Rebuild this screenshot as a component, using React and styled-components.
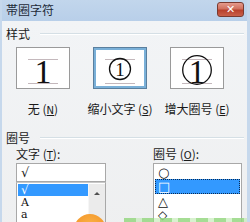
import React from "react";
import styled, { createGlobalStyle } from "styled-components";

const Global = createGlobalStyle`
  html, body { margin: 0; padding: 0; background: #f0f0f0; }
  body { font-family: "Noto Sans CJK SC", "DejaVu Sans", sans-serif; }
`;

const Window = styled.div`
  position: relative;
  width: 250px;
  height: 222px;
  overflow: hidden;
  background: #f0f0f0;
  box-sizing: border-box;
  border-left: 2px solid #c6d8ec;
  border-right: 3px solid #c6d8ec;
  display: flex;
  flex-direction: column;
  font-size: 12px;
  color: #1a1a1a;
`;

const TitleBar = styled.div`
  height: 21px;
  flex: none;
  display: flex;
  align-items: center;
  justify-content: space-between;
  padding: 0 3px 0 4px;
  background: linear-gradient(#c2d6ec, #b8cfe9);
`;

const Title = styled.span`
  font-size: 12px;
  line-height: 12px;
  color: #1e2a38;
  margin-top: -1px;
`;

const CloseBtn = styled.div`
  width: 27px;
  height: 15px;
  margin-top: -3px;
  box-sizing: border-box;
  border: 1px solid #7a3a30;
  border-radius: 3px;
  background: linear-gradient(#e59a8c 0%, #d0705e 45%, #b8402c 55%, #c9604a 100%);
  display: flex;
  align-items: center;
  justify-content: center;
  color: #fff;
  font-family: "DejaVu Sans", sans-serif;
  font-weight: bold;
  font-size: 11px;
  line-height: 11px;
`;

const Body = styled.div`
  flex: 1;
  display: flex;
  flex-direction: column;
  padding: 5px 3px 0 4px;
  background: linear-gradient(#f2f4f6, #eeeff0);
`;

const GroupHead = styled.div`
  display: flex;
  align-items: center;
  gap: 10px;
  height: 13px;
  flex: none;
  margin-top: ${p => p.$top || 0}px;
`;

const GroupLabel = styled.span`
  font-size: 12px;
  line-height: 12px;
`;

const GroupLine = styled.div`
  flex: 1;
  height: 0;
  border-top: 1px solid #d5dfe5;
  border-bottom: 1px solid #ffffff;
`;

const StyleRow = styled.div`
  display: flex;
  gap: 23px;
  padding-left: 10px;
  margin-top: 7px;
`;

const StyleCol = styled.div`
  display: flex;
  flex-direction: column;
  align-items: center;
  width: 54px;
`;

const Preview = styled.div`
  width: 54px;
  height: 42px;
  box-sizing: border-box;
  background: #fff;
  border: ${p => (p.$active ? "3px solid #7ab0d8" : "1px solid #9a9a9a")};
  outline: ${p => (p.$active ? "1px solid #5a7f9e" : "none")};
  outline-offset: -1px;
  display: flex;
  align-items: center;
  justify-content: center;
  overflow: visible;
`;

const OptLabel = styled.div`
  margin-top: 14px;
  font-size: 12px;
  line-height: 12px;
  height: 12px;
  white-space: nowrap;
`;

const U = styled.span`
  text-decoration: underline;
  font-family: "DejaVu Sans", sans-serif;
  font-size: 10px;
`;

const ListsRow = styled.div`
  display: flex;
  padding-left: 10px;
  gap: 47px;
  margin-top: 4px;
`;

const Field = styled.div`
  display: flex;
  flex-direction: column;
  width: ${p => p.$w}px;
`;

const FieldLabel = styled.div`
  font-size: 12px;
  line-height: 12px;
  height: 13px;
  margin-bottom: 2px;
`;

const EditBox = styled.div`
  height: 19px;
  box-sizing: border-box;
  border: 1px solid #a8a8a8;
  background: #fff;
  display: flex;
  align-items: center;
  padding-left: 4px;
  font-family: "DejaVu Serif", serif;
  font-size: 13px;
  font-style: italic;
`;

const ComboList = styled.div`
  height: 60px;
  box-sizing: border-box;
  border: 1px solid #a8a8a8;
  border-top: 1px solid #c8c8c8;
  background: #fff;
  display: flex;
  padding: 1px 0 0 1px;
`;

const Items = styled.div`
  flex: 1;
  display: flex;
  flex-direction: column;
`;

const Item = styled.div`
  height: ${p => p.$h}px;
  flex: none;
  box-sizing: border-box;
  display: flex;
  align-items: center;
  padding-left: ${p => (p.$focus ? 2 : 3)}px;
  font-family: "DejaVu Serif", serif;
  font-size: ${p => p.$fs || 12}px;
  line-height: 1;
  background: ${p => (p.$sel ? "#3399ff" : "transparent")};
  color: ${p => (p.$sel ? "#ffffff" : "#111")};
  border: ${p => (p.$focus ? "1px dotted #0a2a50" : "none")};
  font-style: ${p => (p.$it ? "italic" : "normal")};
`;

const ScrollBar = styled.div`
  width: 17px;
  background: #ebebeb;
  border-left: 1px solid #f6f6f6;
  display: flex;
  justify-content: center;
  padding-top: 8px;
  box-sizing: border-box;
`;

const Arrow = styled.div`
  width: 0;
  height: 0;
  border-left: 3px solid transparent;
  border-right: 3px solid transparent;
  border-bottom: 3px solid #505050;
`;

const Listbox = styled.div`
  height: 60px;
  box-sizing: border-box;
  border: 1px solid #a8a8a8;
  background: #fff;
  padding: 1px 1px 0;
  display: flex;
  flex-direction: column;
`;

const Orange = styled.div`
  position: absolute;
  left: 72px;
  top: 214px;
  width: 32px;
  height: 32px;
  border-radius: 50%;
  background: radial-gradient(circle at 50% 40%, #fbb54a, #f08a1c);
`;

const Green = styled.div`
  position: absolute;
  left: 122px;
  top: 218px;
  width: 126px;
  height: 6px;
  background: repeating-linear-gradient(90deg, rgba(150,215,130,0.85) 0 12px, rgba(190,232,175,0.6) 12px 18px);
`;

const Art = styled.svg`
  flex: none;
  overflow: visible;
`;

function PreviewArt({ kind }) {
  return (
    <Art width="44" height="40" viewBox="0 0 44 40">
      <line x1="7" y1="11.5" x2="37" y2="11.5" stroke="#c4b8bc" strokeWidth="1" />
      <line x1="7" y1="35.5" x2="37" y2="35.5" stroke="#c4b8bc" strokeWidth="1" />
      {kind === "none" && (
        <text x="22" y="35" textAnchor="middle" fontFamily="Liberation Serif, serif" fontSize="34" fill="#111">1</text>
      )}
      {kind === "small" && (
        <>
          <circle cx="22" cy="21" r="10.5" fill="none" stroke="#111" strokeWidth="1.3" />
          <text x="22" y="27.5" textAnchor="middle" fontFamily="Liberation Serif, serif" fontSize="19" fill="#111">1</text>
        </>
      )}
      {kind === "big" && (
        <>
          <circle cx="22" cy="22" r="14.3" fill="none" stroke="#111" strokeWidth="1.3" />
          <text x="22" y="35" textAnchor="middle" fontFamily="Liberation Serif, serif" fontSize="33" fill="#111">1</text>
        </>
      )}
    </Art>
  );
}

export default function App() {
  return (
    <>
      <Global />
      <Window>
        <TitleBar>
          <Title>帯圈字符</Title>
          <CloseBtn>✕</CloseBtn>
        </TitleBar>
        <Body>
          <GroupHead $top={1}>
            <GroupLabel>样式</GroupLabel>
            <GroupLine />
          </GroupHead>
          <StyleRow>
            <StyleCol>
              <Preview><PreviewArt kind="none" /></Preview>
              <OptLabel>无 (<U>N</U>)</OptLabel>
            </StyleCol>
            <StyleCol>
              <Preview $active><PreviewArt kind="small" /></Preview>
              <OptLabel>缩小文字 (<U>S</U>)</OptLabel>
            </StyleCol>
            <StyleCol>
              <Preview><PreviewArt kind="big" /></Preview>
              <OptLabel>增大圈号 (<U>E</U>)</OptLabel>
            </StyleCol>
          </StyleRow>
          <GroupHead $top={16}>
            <GroupLabel>圈号</GroupLabel>
            <GroupLine />
          </GroupHead>
          <ListsRow>
            <Field $w={90}>
              <FieldLabel>文字 (<U>T</U>):</FieldLabel>
              <EditBox>√</EditBox>
              <ComboList>
                <Items>
                  <Item $h={12} $sel $it>√</Item>
                  <Item $h={12} $fs={11}>A</Item>
                  <Item $h={12} $fs={11}>a</Item>
                </Items>
                <ScrollBar><Arrow /></ScrollBar>
              </ComboList>
            </Field>
            <Field $w={89}>
              <FieldLabel>圈号 (<U>O</U>):</FieldLabel>
              <Listbox>
                <Item $h={14} $fs={13}>○</Item>
                <Item $h={15} $fs={13} $sel $focus>□</Item>
                <Item $h={14} $fs={13}>△</Item>
                <Item $h={13} $fs={12}>◇</Item>
              </Listbox>
            </Field>
          </ListsRow>
        </Body>
        <Orange />
        <Green />
      </Window>
    </>
  );
}
